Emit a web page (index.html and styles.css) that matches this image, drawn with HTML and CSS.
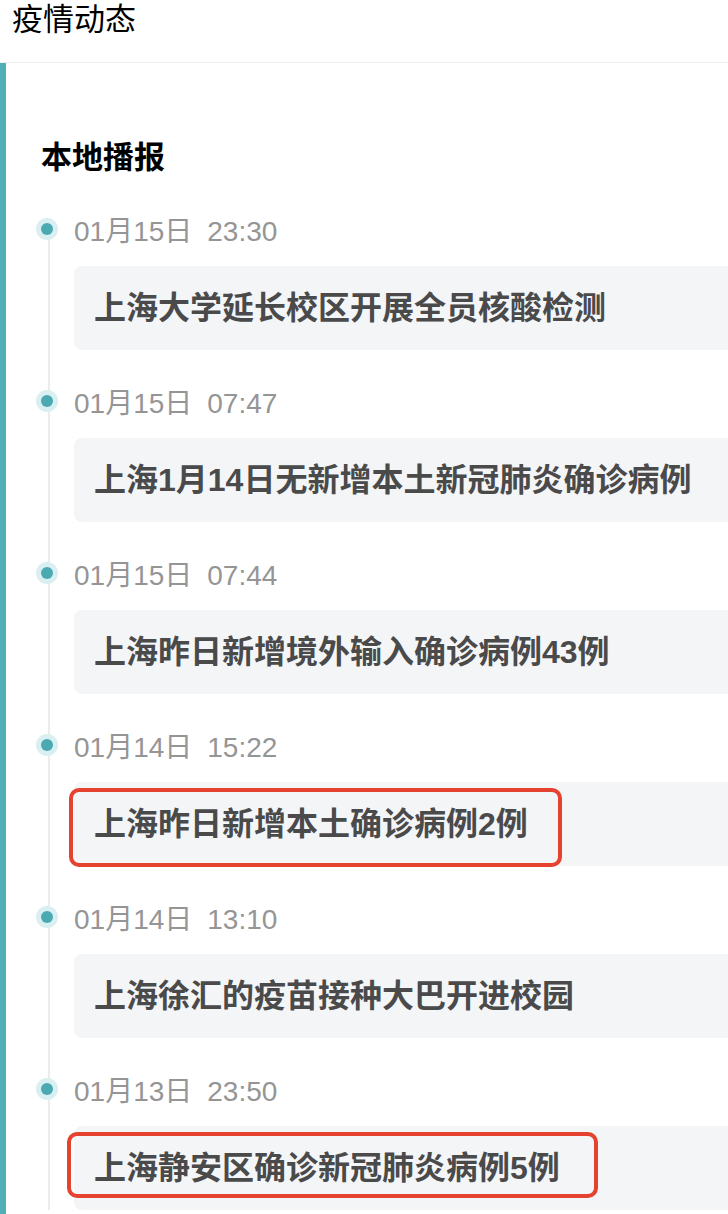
FILE: index.html
```html
<!DOCTYPE html>
<html lang="zh-CN">
<head>
<meta charset="utf-8">
<title>疫情动态</title>
<link rel="stylesheet" href="styles.css">
</head>
<body>
<header class="top-bar"><h1 class="page-title">疫情动态</h1></header>
<main class="panel">
  <h2 class="section-title">本地播报</h2>
  <ul class="timeline">
    <li class="tl-item">
      <span class="tl-dot"></span>
      <div class="tl-time">01月15日<span class="tl-clock">23:30</span></div>
      <div class="tl-card">上海大学延长校区开展全员核酸检测</div>
    </li>
    <li class="tl-item">
      <span class="tl-dot"></span>
      <div class="tl-time">01月15日<span class="tl-clock">07:47</span></div>
      <div class="tl-card">上海1月14日无新增本土新冠肺炎确诊病例</div>
    </li>
    <li class="tl-item">
      <span class="tl-dot"></span>
      <div class="tl-time">01月15日<span class="tl-clock">07:44</span></div>
      <div class="tl-card">上海昨日新增境外输入确诊病例43例</div>
    </li>
    <li class="tl-item">
      <span class="tl-dot"></span>
      <div class="tl-time">01月14日<span class="tl-clock">15:22</span></div>
      <div class="tl-card">上海昨日新增本土确诊病例2例<span class="mark mark-a"></span></div>
    </li>
    <li class="tl-item">
      <span class="tl-dot"></span>
      <div class="tl-time">01月14日<span class="tl-clock">13:10</span></div>
      <div class="tl-card">上海徐汇的疫苗接种大巴开进校园</div>
    </li>
    <li class="tl-item">
      <span class="tl-dot"></span>
      <div class="tl-time">01月13日<span class="tl-clock">23:50</span></div>
      <div class="tl-card">上海静安区确诊新冠肺炎病例5例<span class="mark mark-b"></span></div>
    </li>
  </ul>
</main>
</body>
</html>
```
FILE: styles.css
```css
html, body {
  margin: 0;
  padding: 0;
  background: #ffffff;
  overflow: hidden;
}
body {
  font-family: "Liberation Sans", "Noto Sans CJK SC", sans-serif;
  color: #000;
}
.top-bar {
  height: 62px;
  border-bottom: 1px solid #efefef;
  padding-left: 12px;
}
.page-title {
  margin: 0;
  font-size: 31px;
  font-weight: 400;
  line-height: 40px;
}
.panel {
  border-left: 6px solid #4eafb7;
  padding: 75px 0 0 35px;
  min-height: 1076px;
}
.section-title {
  margin: 0;
  font-size: 31px;
  font-weight: 700;
  line-height: 40px;
  color: #000;
}
.timeline {
  list-style: none;
  margin: 34px 0 0 0;
  padding: 0 0 0 33px;
  position: relative;
}
.timeline::before {
  content: "";
  position: absolute;
  left: 7px;
  top: 24px;
  bottom: 0;
  width: 2px;
  background: #ececec;
}
.tl-item {
  position: relative;
  margin-bottom: 34px;
}
.tl-item:last-child {
  margin-bottom: 0;
}
.tl-dot {
  position: absolute;
  left: -38px;
  top: 6px;
  width: 22px;
  height: 22px;
  border-radius: 50%;
  background: #d9eff1;
  display: flex;
  align-items: center;
  justify-content: center;
}
.tl-dot::after {
  content: "";
  width: 12px;
  height: 12px;
  border-radius: 50%;
  background: #4ba9b2;
}
.tl-time {
  font-size: 28px;
  line-height: 40px;
  color: #959595;
}
.tl-clock {
  margin-left: 15px;
}
.tl-card {
  position: relative;
  margin-top: 14px;
  height: 84px;
  line-height: 84px;
  padding: 0 20px;
  background: #f4f5f7;
  border-radius: 8px 0 0 8px;
  font-size: 32px;
  font-weight: 700;
  color: #4a4a4b;
  white-space: nowrap;
}
.mark {
  position: absolute;
  border: 4px solid #e5432f;
  border-radius: 10px;
  box-sizing: border-box;
}
.mark-a {
  left: -5px;
  top: 6px;
  width: 493px;
  height: 79px;
}
.mark-b {
  left: -7px;
  top: 6px;
  width: 531px;
  height: 66px;
}
```
